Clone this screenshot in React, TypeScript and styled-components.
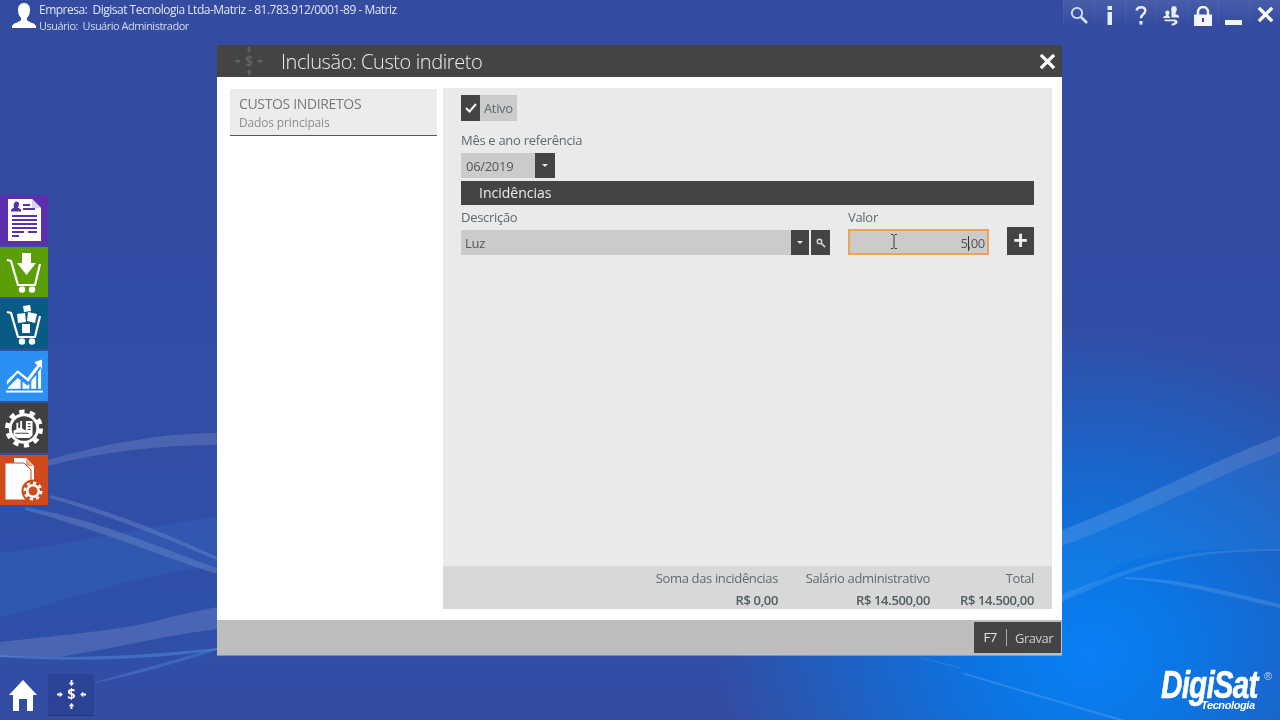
import styled, { createGlobalStyle } from "styled-components";

const GlobalStyle = createGlobalStyle`
  html, body {
    margin: 0;
    padding: 0;
    width: 1280px;
    height: 720px;
    overflow: hidden;
  }
  body {
    font-family: "Open Sans", "Noto Sans", sans-serif;
  }
`;

const DARK = "#444444";
const TEXT = "#5d6b70";

const UserIcon = () => (
  <svg width="24" height="26" viewBox="0 0 24 26" fill="#fff">
    <path d="M12 0c4 0 6 3 6 7 0 3-1 6-3 8v2c1 2 8 3 9 6v2H0v-2c1-3 8-4 9-6v-2C7 13 6 10 6 7c0-4 2-7 6-7z" />
  </svg>
);

const SearchIcon = () => (
  <svg width="18" height="18" viewBox="0 0 18 18" fill="none" stroke="#d9e1f4">
    <circle cx="7" cy="7" r="5.2" strokeWidth="1.800" />
    <path d="M11 11l6 6" strokeWidth="2.600" />
  </svg>
);

const InfoIcon = () => (
  <svg width="6" height="19" viewBox="0 0 6 19" fill="#e8eefa">
    <rect x="0.5" y="0" width="4.500" height="4" />
    <rect x="0.5" y="6" width="4.500" height="13" />
  </svg>
);

const HelpIcon = () => (
  <svg width="12" height="19" viewBox="0 0 12 19" fill="none" stroke="#e8eefa">
    <path d="M1.500 4.500C2 2 4 1.200 6 1.200c2.600 0 4.300 1.500 4.300 3.600 0 3.400-4.300 3.600-4.300 7.400" strokeWidth="2.400" />
    <rect x="4.500" y="15" width="3" height="3.600" fill="#e8eefa" stroke="none" />
  </svg>
);

const UsersIcon = () => (
  <svg width="18" height="20" viewBox="0 0 18 20" fill="#e8eefa">
    <path d="M11 0c1.800 0 2.800 1.300 2.800 3.200 0 1.500-.7 2.800-1.300 3.500v1.500c1.500.4 3 .8 3.500 1.800v1.500H8.500V5.800C8.300 5 8.200 4 8.200 3.200 8.200 1.300 9.200 0 11 0z" />
    <path d="M4.500 4.500c1.200 0 2 .9 2 2.200 0 1-.5 1.900-.9 2.400v1l1.400.6v1.300H0v-.8c.3-.8 2-1.200 3-1.500V9C2.700 8.500 2.300 7.700 2.300 6.700c0-1.300.9-2.200 2.200-2.200z" />
    <path d="M1 13.500h9.500c2 0 4 .5 4 2.200 0 2.500-3 3.800-6 3.800v-2c1.800 0 3.300-.6 3.300-1.500 0-.5-.8-.7-1.800-.7H2z" />
  </svg>
);

const LockIcon = () => (
  <svg width="18" height="20" viewBox="0 0 18 20">
    <path d="M4 9V6a5 5 0 0110 0v3" fill="none" stroke="#f2f5fc" strokeWidth="2.400" />
    <path fill="#f2f5fc" d="M0 8.500h18V20H0z" />
    <rect x="8" y="12" width="2" height="4" fill="#33499f" />
  </svg>
);

const MinimizeIcon = () => (
  <svg width="18" height="20" viewBox="0 0 18 20" fill="#f2f5fc">
    <rect x="0" y="14" width="17" height="5" />
  </svg>
);

const CloseIcon = ({ size = 18 }: { size?: number }) => (
  <svg width={size} height={size} viewBox="0 0 18 18" fill="none" stroke="#fff">
    <path d="M2 2l14 14M16 2L2 16" strokeWidth="3.600" />
  </svg>
);

const ReportIcon = () => (
  <svg width="33" height="42" viewBox="0 0 33 42">
    <path fill="#fff" d="M0 0h24l9 9v33H0z" />
    <path fill="#d8d0ee" d="M24 0l9 9h-9z" />
    <path fill="#5b2fae" d="M6 5a2.500 2.500 0 015 0c0 2-1 2.500-1 3.500l3 2v2H3v-2l3-2C6 7.500 5 7 6 5z" />
    <path stroke="#5b2fae" strokeWidth="1.800" d="M15 6h7M15 10h12M4 17h25M4 21h25M4 25h25M4 29h25M4 33h12M20 33h9M4 37h7" />
  </svg>
);

const CartBase = () => (
  <>
    <path d="M1 9l4 1 7 24h17l5-21" fill="none" stroke="#fff" strokeWidth="2.200" />
    <circle cx="16" cy="38.500" r="3.200" fill="#fff" />
    <circle cx="26" cy="38.500" r="3.200" fill="#fff" />
  </>
);

const CartDownIcon = () => (
  <svg width="36" height="42" viewBox="0 0 36 42" fill="#fff">
    <CartBase />
    <path d="M16 2h9v10h5L20.500 24 11 12h5z" />
  </svg>
);

const CartBoxesIcon = () => (
  <svg width="36" height="42" viewBox="0 0 36 42" fill="#fff">
    <CartBase />
    <path d="M17 3l7-1 1 6-7 1zM11 11l8-1 1 9-8 1zM22 9l9 2-2 9-8-2zM16 21h8v9h-8z" />
  </svg>
);

const ChartIcon = () => (
  <svg width="37" height="38" viewBox="0 0 38 38" fill="#fff">
    <path d="M1 24L12 13l10 8L32 8l-3-3 8-3v10l-2-3-12 16-11-9L1 28z" />
    <path d="M2 31l10-10 3 2v9H2zM17 25l5 4 2-2v5h-7zM26 24l5-6v14h-5zM33 15l3-4v21h-3z" />
    <rect x="0" y="34" width="38" height="2" />
  </svg>
);

const FactoryGearIcon = () => (
  <svg width="38" height="41" viewBox="0 0 40 42">
    <circle cx="20" cy="21" r="17.500" fill="none" stroke="#fff" strokeWidth="5" strokeDasharray="5.500 5.500" />
    <circle cx="20" cy="21" r="14.500" fill="none" stroke="#fff" strokeWidth="3" />
    <path fill="#fff" d="M9 28v-5l3-1v-7h2v6l2-1v-7h2v8l4 2V13h7v15l-3 3H13z" />
    <path stroke={DARK} strokeWidth="1.200" d="M24 16h3M24 19h3M24 22h3M11 26h14" />
  </svg>
);

const DocGearIcon = () => (
  <svg width="38" height="44" viewBox="0 0 38 44">
    <path fill="#fff" d="M9 0h12l8 8v18H9z" />
    <path fill="#d04a1c" d="M21 1v7h7z" opacity=".55" />
    <path fill="#fff" stroke="#d04a1c" strokeWidth="1" d="M0 5h19l7 7v30H0z" />
    <circle cx="28" cy="33" r="11.500" fill="#d04a1c" />
    <circle cx="28" cy="33" r="8.200" fill="none" stroke="#fff" strokeWidth="2.600" strokeDasharray="3.200 3.200" />
    <circle cx="28" cy="33" r="5.800" fill="none" stroke="#fff" strokeWidth="2.600" />
  </svg>
);

const HomeIcon = () => (
  <svg width="28" height="31" viewBox="0 0 28 31" fill="#fff">
    <path d="M14 0l14 15h-4v16h-6V19h-8v12H4V15H0z" />
  </svg>
);

const MoneyArrows = ({ color, width }: { color: string; width: number }) => (
  <svg width={width} height={width} viewBox="0 0 32 32" fill={color}>
    <path d="M15 0h2v3h2l-3 3.500L13 3h2zM15 32h2v-3h2l-3-3.500L13 29h2zM0 15v2h3v2l3.500-3L3 13v2zM32 15v2h-3v2l-3.500-3L29 13v2z" />
    <text x="16" y="21.500" fontFamily="Open Sans" fontSize="16" fontWeight="700" textAnchor="middle">$</text>
  </svg>
);

const CheckIcon = () => (
  <svg width="12" height="10" viewBox="0 0 12 10" fill="none" stroke="#fff">
    <path d="M1 5l3.500 3.500L11 1" strokeWidth="2" />
  </svg>
);

const KeyIcon = () => (
  <svg width="10" height="10" viewBox="0 0 11 11" fill="none" stroke="#d8d8d8">
    <circle cx="3.800" cy="3.800" r="2.400" strokeWidth="1.500" />
    <path d="M5.500 5.500l4.500 4.500" strokeWidth="1.800" />
  </svg>
);

const IBeam = () => (
  <svg width="8" height="15" viewBox="0 0 8 15" fill="none" stroke="#3a3a3a" strokeWidth="1">
    <path d="M1 .5h2l1 1 1-1h2M4 1.500v12M1 14.500h2l1-1 1 1h2" />
  </svg>
);

const Wallpaper = () => (
  <WallpaperSvg viewBox="0 0 1280 720">
    {/* left side */}
    <path d="M48 460C100 445 160 433 217 433v12C160 445 100 452 48 466z" fill="#fff" opacity=".13" />
    <path d="M50 495C110 510 170 535 217 557v3C170 540 110 516 50 498z" fill="#fff" opacity=".14" />
    <path d="M25 507C100 520 165 550 217 568v6C165 558 100 530 25 510z" fill="#fff" opacity=".14" />
    <path d="M0 553C70 545 150 525 217 517v50C150 570 70 600 0 617z" fill="#3f8fe0" opacity=".14" />
    <path d="M0 642C60 635 130 630 170 617L217 607v22C170 635 130 645 60 657H0z" fill="#fff" opacity=".13" />
    <path d="M0 655C70 660 150 655 217 648v2C150 660 70 662 0 657z" fill="#5a9fea" opacity=".4" />
    <path d="M95 682C140 670 180 658 217 648v2C180 662 140 674 95 683z" fill="#5a9fea" opacity=".3" />
    {/* right side */}
    <path d="M1062 530C1130 505 1210 462 1280 436v16C1210 478 1130 522 1062 546z" fill="#fff" opacity=".13" />
    <path d="M1062 546C1130 522 1210 478 1280 452v98C1220 548 1160 550 1120 565L1062 602z" fill="#3f9ff0" opacity=".13" />
    <path d="M1062 594C1100 580 1130 566 1180 556c35-6 70-7 100-7v2c-30 0-65 1-100 8-50 11-80 26-118 43z" fill="#fff" opacity=".1" />
    <path d="M1125 577C1180 578 1230 592 1280 604v4C1230 597 1180 582 1125 579z" fill="#fff" opacity=".12" />
    <path d="M920 657L959 667l4 2-42-11zM965 673L1125 720h-8L962 674z" fill="#fff" opacity=".14" />
  </WallpaperSvg>
);

const summary = [
  { label: "Soma das incidências", value: "R$ 0,00" },
  { label: "Salário administrativo", value: "R$ 14.500,00" },
  { label: "Total", value: "R$ 14.500,00" },
];

const dockTiles = [
  { color: "#5b2fae", icon: <ReportIcon /> },
  { color: "#5a9e08", icon: <CartDownIcon /> },
  { color: "#0a5a86", icon: <CartBoxesIcon /> },
  { color: "#2a90f4", icon: <ChartIcon /> },
  { color: "#404040", icon: <FactoryGearIcon /> },
  { color: "#d04a1c", icon: <DocGearIcon /> },
];

const topIcons = [
  <SearchIcon />,
  <InfoIcon />,
  <HelpIcon />,
  <UsersIcon />,
  <LockIcon />,
  <MinimizeIcon />,
  <CloseIcon size={17} />,
];

const App = () => {
  return (
    <Desktop>
      <GlobalStyle />
      <Wallpaper />
      <TopBar>
        <UserBlock>
          <UserIcon />
          <UserText>
            <span>Empresa:&nbsp; Digisat Tecnologia Ltda-Matriz - 81.783.912/0001-89 - Matriz</span>
            <small>Usuário:&nbsp; Usuário Administrador</small>
          </UserText>
        </UserBlock>
        <TopActions>
          {topIcons.map((icon, i) => (
            <TopAction key={i}>{icon}</TopAction>
          ))}
        </TopActions>
      </TopBar>

      <Middle>
        <Dock>
          {dockTiles.map((tile) => (
            <DockTile key={tile.color} $color={tile.color}>
              {tile.icon}
            </DockTile>
          ))}
        </Dock>

        <Window>
          <WindowHeader>
            <HeaderTitle>
              <MoneyArrows color="#636363" width={28} />
              <h1>Inclusão: Custo indireto</h1>
            </HeaderTitle>
            <CloseIcon size={17} />
          </WindowHeader>

          <WindowBody>
            <SideNav>
              <NavItem>
                <strong>CUSTOS INDIRETOS</strong>
                <span>Dados principais</span>
              </NavItem>
            </SideNav>

            <Panel>
              <Form>
                <CheckRow>
                  <CheckBox>
                    <CheckIcon />
                  </CheckBox>
                  <CheckLabel>Ativo</CheckLabel>
                </CheckRow>

                <FieldLabel $top={11}>Mês e ano referência</FieldLabel>
                <DateField>
                  <DateValue>06/2019</DateValue>
                  <SquareButton $width={20}>
                    <Caret />
                  </SquareButton>
                </DateField>

                <SectionBar>Incidências</SectionBar>

                <FieldsRow>
                  <Field>
                    <FieldLabel>Descrição</FieldLabel>
                    <Combo>
                      <ComboValue>Luz</ComboValue>
                      <SquareButton $width={18}>
                        <Caret />
                      </SquareButton>
                      <SquareButton $width={19}>
                        <KeyIcon />
                      </SquareButton>
                    </Combo>
                  </Field>
                  <ValueField>
                    <FieldLabel>Valor</FieldLabel>
                    <ValueRow>
                      <ValueInput>
                        <TextCursor>
                          <IBeam />
                        </TextCursor>
                        <ValueText>
                          5<InputCaret />,00
                        </ValueText>
                      </ValueInput>
                      <PlusButton>+</PlusButton>
                    </ValueRow>
                  </ValueField>
                </FieldsRow>
              </Form>

              <Summary>
                {summary.map((item) => (
                  <SummaryCell key={item.label}>
                    <span>{item.label}</span>
                    <b>{item.value}</b>
                  </SummaryCell>
                ))}
              </Summary>
            </Panel>
          </WindowBody>

          <WindowFooter>
            <SaveButton>
              <kbd>F7</kbd>
              <span>Gravar</span>
            </SaveButton>
          </WindowFooter>
        </Window>
      </Middle>

      <BottomBar>
        <HomeLinks>
          <HomeIcon />
          <ModuleTile>
            <MoneyArrows color="#fff" width={29} />
          </ModuleTile>
        </HomeLinks>
        <Logo>
          <LogoName>DigiSat</LogoName>
          <LogoMark>®</LogoMark>
          <LogoSub>Tecnologia</LogoSub>
        </Logo>
      </BottomBar>
    </Desktop>
  );
};

const Desktop = styled.div`
  position: relative;
  width: 1280px;
  height: 720px;
  overflow: hidden;
  display: flex;
  flex-direction: column;
  filter: blur(0.4px);
  background:
    radial-gradient(370px 330px at 1090px 655px, #0880f5 0%, #0c74e2 30%, rgba(52, 76, 160, 0) 100%),
    linear-gradient(180deg, #344ba0 0%, #314ea5 60%, #2d50aa 85%, #344ca0 100%);
`;

const WallpaperSvg = styled.svg`
  position: absolute;
  inset: 0;
  width: 1280px;
  height: 720px;
`;

const TopBar = styled.header`
  position: relative;
  height: 45px;
  flex: none;
  display: flex;
  justify-content: space-between;
  align-items: flex-start;
`;

const UserBlock = styled.div`
  display: flex;
  align-items: flex-start;
  gap: 3px;
  padding: 3px 0 0 12px;
  color: #dfe5f5;
`;

const UserText = styled.div`
  display: flex;
  flex-direction: column;
  font-size: 12px;
  line-height: 16px;
  margin-top: -1px;
  letter-spacing: -0.5px;
  small {
    font-size: 11px;
    line-height: 15px;
    letter-spacing: -0.5px;
    color: #d3daee;
  }
`;

const TopActions = styled.div`
  display: flex;
`;

const TopAction = styled.div`
  width: 31px;
  height: 26px;
  display: flex;
  align-items: flex-start;
  justify-content: center;
  padding-top: 6px;
  box-sizing: border-box;
  border-left: 1px solid rgba(255, 255, 255, 0.05);
  background: linear-gradient(180deg, rgba(255, 255, 255, 0.1), rgba(255, 255, 255, 0));
`;

const Middle = styled.main`
  position: relative;
  flex: 1;
  display: flex;
  align-items: flex-start;
`;

const Dock = styled.nav`
  width: 49px;
  margin-top: 150px;
  display: flex;
  flex-direction: column;
  gap: 2px;
`;

const DockTile = styled.div<{ $color: string }>`
  width: 48px;
  height: 50px;
  display: flex;
  align-items: center;
  justify-content: center;
  background: ${(p) => p.$color};
`;

const Window = styled.section`
  width: 845px;
  height: 610px;
  margin-left: 168px;
  display: flex;
  flex-direction: column;
  background: #fff;
  box-shadow: 0 1px 0 rgba(255, 255, 255, 0.35);
`;

const WindowHeader = styled.div`
  height: 32px;
  flex: none;
  display: flex;
  align-items: center;
  justify-content: space-between;
  padding: 0 6px 0 18px;
  background: ${DARK};
`;

const HeaderTitle = styled.div`
  display: flex;
  align-items: center;
  gap: 18px;
  h1 {
    margin: 0;
    font-size: 20px;
    font-weight: 300;
    letter-spacing: -0.42px;
    color: #ececec;
  }
`;

const WindowBody = styled.div`
  flex: 1;
  display: flex;
  gap: 6px;
  padding: 11px 10px 11px 13px;
`;

const SideNav = styled.aside`
  width: 207px;
  flex: none;
  padding-top: 1px;
`;

const NavItem = styled.div`
  height: 46px;
  padding-left: 9px;
  box-sizing: content-box;
  background: #ececec;
  border-bottom: 1px solid #555;
  display: flex;
  flex-direction: column;
  justify-content: center;
  gap: 1px;
  strong {
    font-size: 14px;
    line-height: 19px;
    font-weight: 400;
    letter-spacing: -0.35px;
    color: #77797b;
  }
  span {
    font-size: 12px;
    line-height: 17px;
    letter-spacing: -0.15px;
    color: #8a8c8e;
  }
`;

const Panel = styled.div`
  flex: 1;
  display: flex;
  flex-direction: column;
  justify-content: space-between;
  background: #eaeaea;
`;

const Form = styled.div`
  padding: 7px 18px 0;
  display: flex;
  flex-direction: column;
`;

const CheckRow = styled.div`
  display: flex;
  width: 56px;
  height: 26px;
`;

const CheckBox = styled.div`
  width: 19px;
  display: flex;
  align-items: center;
  justify-content: center;
  background: ${DARK};
`;

const CheckLabel = styled.div`
  flex: 1;
  padding-left: 4px;
  font-size: 13px;
  line-height: 26px;
  letter-spacing: -0.35px;
  color: ${TEXT};
  background: #cbcbcb;
`;

const FieldLabel = styled.div<{ $top?: number }>`
  margin-top: ${(p) => p.$top ?? 0}px;
  font-size: 13px;
  line-height: 17px;
  letter-spacing: -0.3px;
  color: ${TEXT};
`;

const DateField = styled.div`
  display: flex;
  width: 94px;
  height: 25px;
  margin-top: 4px;
`;

const DateValue = styled.div`
  flex: 1;
  padding-left: 5px;
  font-size: 13px;
  line-height: 26px;
  letter-spacing: -0.3px;
  color: #555;
  background: #cbcbcb;
`;

const SquareButton = styled.div<{ $width: number }>`
  width: ${(p) => p.$width}px;
  flex: none;
  display: flex;
  align-items: center;
  justify-content: center;
  background: ${DARK};
`;

const Caret = styled.i`
  width: 0;
  height: 0;
  border-left: 3px solid transparent;
  border-right: 3px solid transparent;
  border-top: 3px solid #e6e6e6;
`;

const SectionBar = styled.div`
  height: 24px;
  margin-top: 3px;
  padding-left: 18px;
  font-size: 14px;
  line-height: 24px;
  letter-spacing: 0;
  color: #ececec;
  background: ${DARK};
`;

const FieldsRow = styled.div`
  display: flex;
  margin-top: 4px;
`;

const Field = styled.div`
  width: 369px;
  flex: none;
`;

const Combo = styled.div`
  display: flex;
  gap: 2px;
  height: 25px;
  margin-top: 4px;
`;

const ComboValue = styled.div`
  flex: 1;
  margin-right: -2px;
  padding-left: 4px;
  font-size: 13px;
  line-height: 26px;
  letter-spacing: -0.3px;
  color: #555;
  background: #cbcbcb;
`;

const ValueField = styled.div`
  flex: 1;
  margin-left: 18px;
`;

const ValueRow = styled.div`
  display: flex;
  align-items: flex-end;
  justify-content: space-between;
  height: 28px;
  margin-top: 1px;
`;

const ValueInput = styled.div`
  position: relative;
  width: 141px;
  height: 26px;
  box-sizing: border-box;
  border: 2px solid #eda45a;
  background: #cbcbcb;
  text-align: right;
  padding-right: 2px;
`;

const ValueText = styled.span`
  font-size: 13px;
  line-height: 24px;
  letter-spacing: -0.3px;
  color: #555;
`;

const InputCaret = styled.i`
  display: inline-block;
  width: 1px;
  height: 15px;
  margin: 0 -1px 0 0;
  vertical-align: -3px;
  background: #333;
`;

const TextCursor = styled.span`
  position: absolute;
  left: 40px;
  top: 3px;
  line-height: 0;
`;

const PlusButton = styled.div`
  width: 27px;
  height: 28px;
  text-align: center;
  font-family: "Liberation Sans", sans-serif;
  font-size: 25px;
  font-weight: 700;
  line-height: 27px;
  color: #f2f2f2;
  background: ${DARK};
`;

const Summary = styled.div`
  height: 43px;
  flex: none;
  box-sizing: border-box;
  display: grid;
  grid-template-columns: 1fr 152px 104px;
  padding: 3px 18px 0 0;
  background: #d8d8d8;
`;

const SummaryCell = styled.div`
  display: flex;
  flex-direction: column;
  align-items: flex-end;
  gap: 4px;
  font-size: 13px;
  line-height: 18px;
  letter-spacing: -0.35px;
  color: ${TEXT};
  b {
    font-weight: 600;
    letter-spacing: -0.35px;
    color: #4f5d62;
  }
`;

const WindowFooter = styled.footer`
  height: 35px;
  flex: none;
  display: flex;
  justify-content: flex-end;
  align-items: center;
  padding-right: 1px;
  background: #bdbdbd;
`;

const SaveButton = styled.div`
  width: 87px;
  height: 31px;
  display: flex;
  align-items: center;
  background: ${DARK};
  color: #e6e6e6;
  font-size: 13px;
  letter-spacing: -0.5px;
  kbd {
    font-family: inherit;
    width: 32px;
    line-height: 17px;
    text-align: center;
    border-right: 1px solid #aaa;
  }
  span {
    padding-left: 8px;
    color: #cfcfcf;
  }
`;

const BottomBar = styled.footer`
  position: relative;
  height: 65px;
  flex: none;
  display: flex;
  justify-content: space-between;
  align-items: flex-end;
`;

const HomeLinks = styled.div`
  display: flex;
  align-items: center;
  gap: 11px;
  padding: 0 0 4px 9px;
`;

const ModuleTile = styled.div`
  width: 46px;
  height: 42px;
  box-sizing: border-box;
  display: flex;
  align-items: center;
  justify-content: center;
  background: rgba(38, 58, 135, 0.5);
  border-bottom: 1px solid rgba(30, 45, 100, 0.7);
`;

const Logo = styled.div`
  position: relative;
  width: 119px;
  padding-bottom: 10px;
  color: #fff;
  font-family: "Liberation Sans", sans-serif;
  font-style: italic;
  font-weight: 700;
`;

const LogoName = styled.div`
  font-size: 38px;
  line-height: 30px;
  letter-spacing: -1px;
  transform: scaleX(0.78);
  transform-origin: left center;
  white-space: nowrap;
  -webkit-text-stroke: 0.6px #fff;
`;

const LogoMark = styled.span`
  position: absolute;
  right: 8px;
  top: 0;
  font-size: 11px;
  font-weight: 400;
  font-style: normal;
  color: #c4d4ee;
`;

const LogoSub = styled.div`
  margin-left: 40px;
  font-size: 11px;
  line-height: 10px;
  letter-spacing: -0.4px;
`;

export default App;
